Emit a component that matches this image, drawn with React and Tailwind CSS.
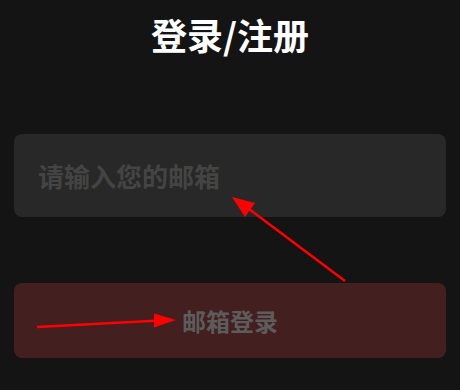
export default function App() {
  return (
    <div
      className="relative w-[460px] h-[390px] bg-[#141414] overflow-hidden"
      style={{ fontFamily: '"Noto Sans CJK SC", "Noto Sans", sans-serif' }}
    >
      <div className="flex flex-col px-[14px]">
        <h1 className="h-[68px] flex items-center justify-center text-[36px] font-bold text-white leading-none">
          登录/注册
        </h1>
        <div className="mt-[66px] h-[83px] rounded-lg bg-[#282828] flex items-center px-6">
          <span className="text-[26px] font-bold text-[#444444] leading-none">请输入您的邮箱</span>
        </div>
        <div className="mt-[66px] h-[75px] rounded-lg bg-[#431f1f] flex items-center justify-center">
          <span className="text-[24px] font-bold text-[#5c5c5c] leading-none">邮箱登录</span>
        </div>
      </div>
      <svg className="absolute inset-0 pointer-events-none" width="460" height="390" viewBox="0 0 460 390">
        <line x1="345" y1="281" x2="245" y2="206" stroke="#ff0000" strokeWidth="2.5" />
        <polygon points="232,197 255,203 245,217" fill="#ff0000" />
        <line x1="37" y1="327" x2="160" y2="320.5" stroke="#ff0000" strokeWidth="2.5" />
        <polygon points="176,320 154,313.5 154,327.5" fill="#ff0000" />
      </svg>
    </div>
  );
}
